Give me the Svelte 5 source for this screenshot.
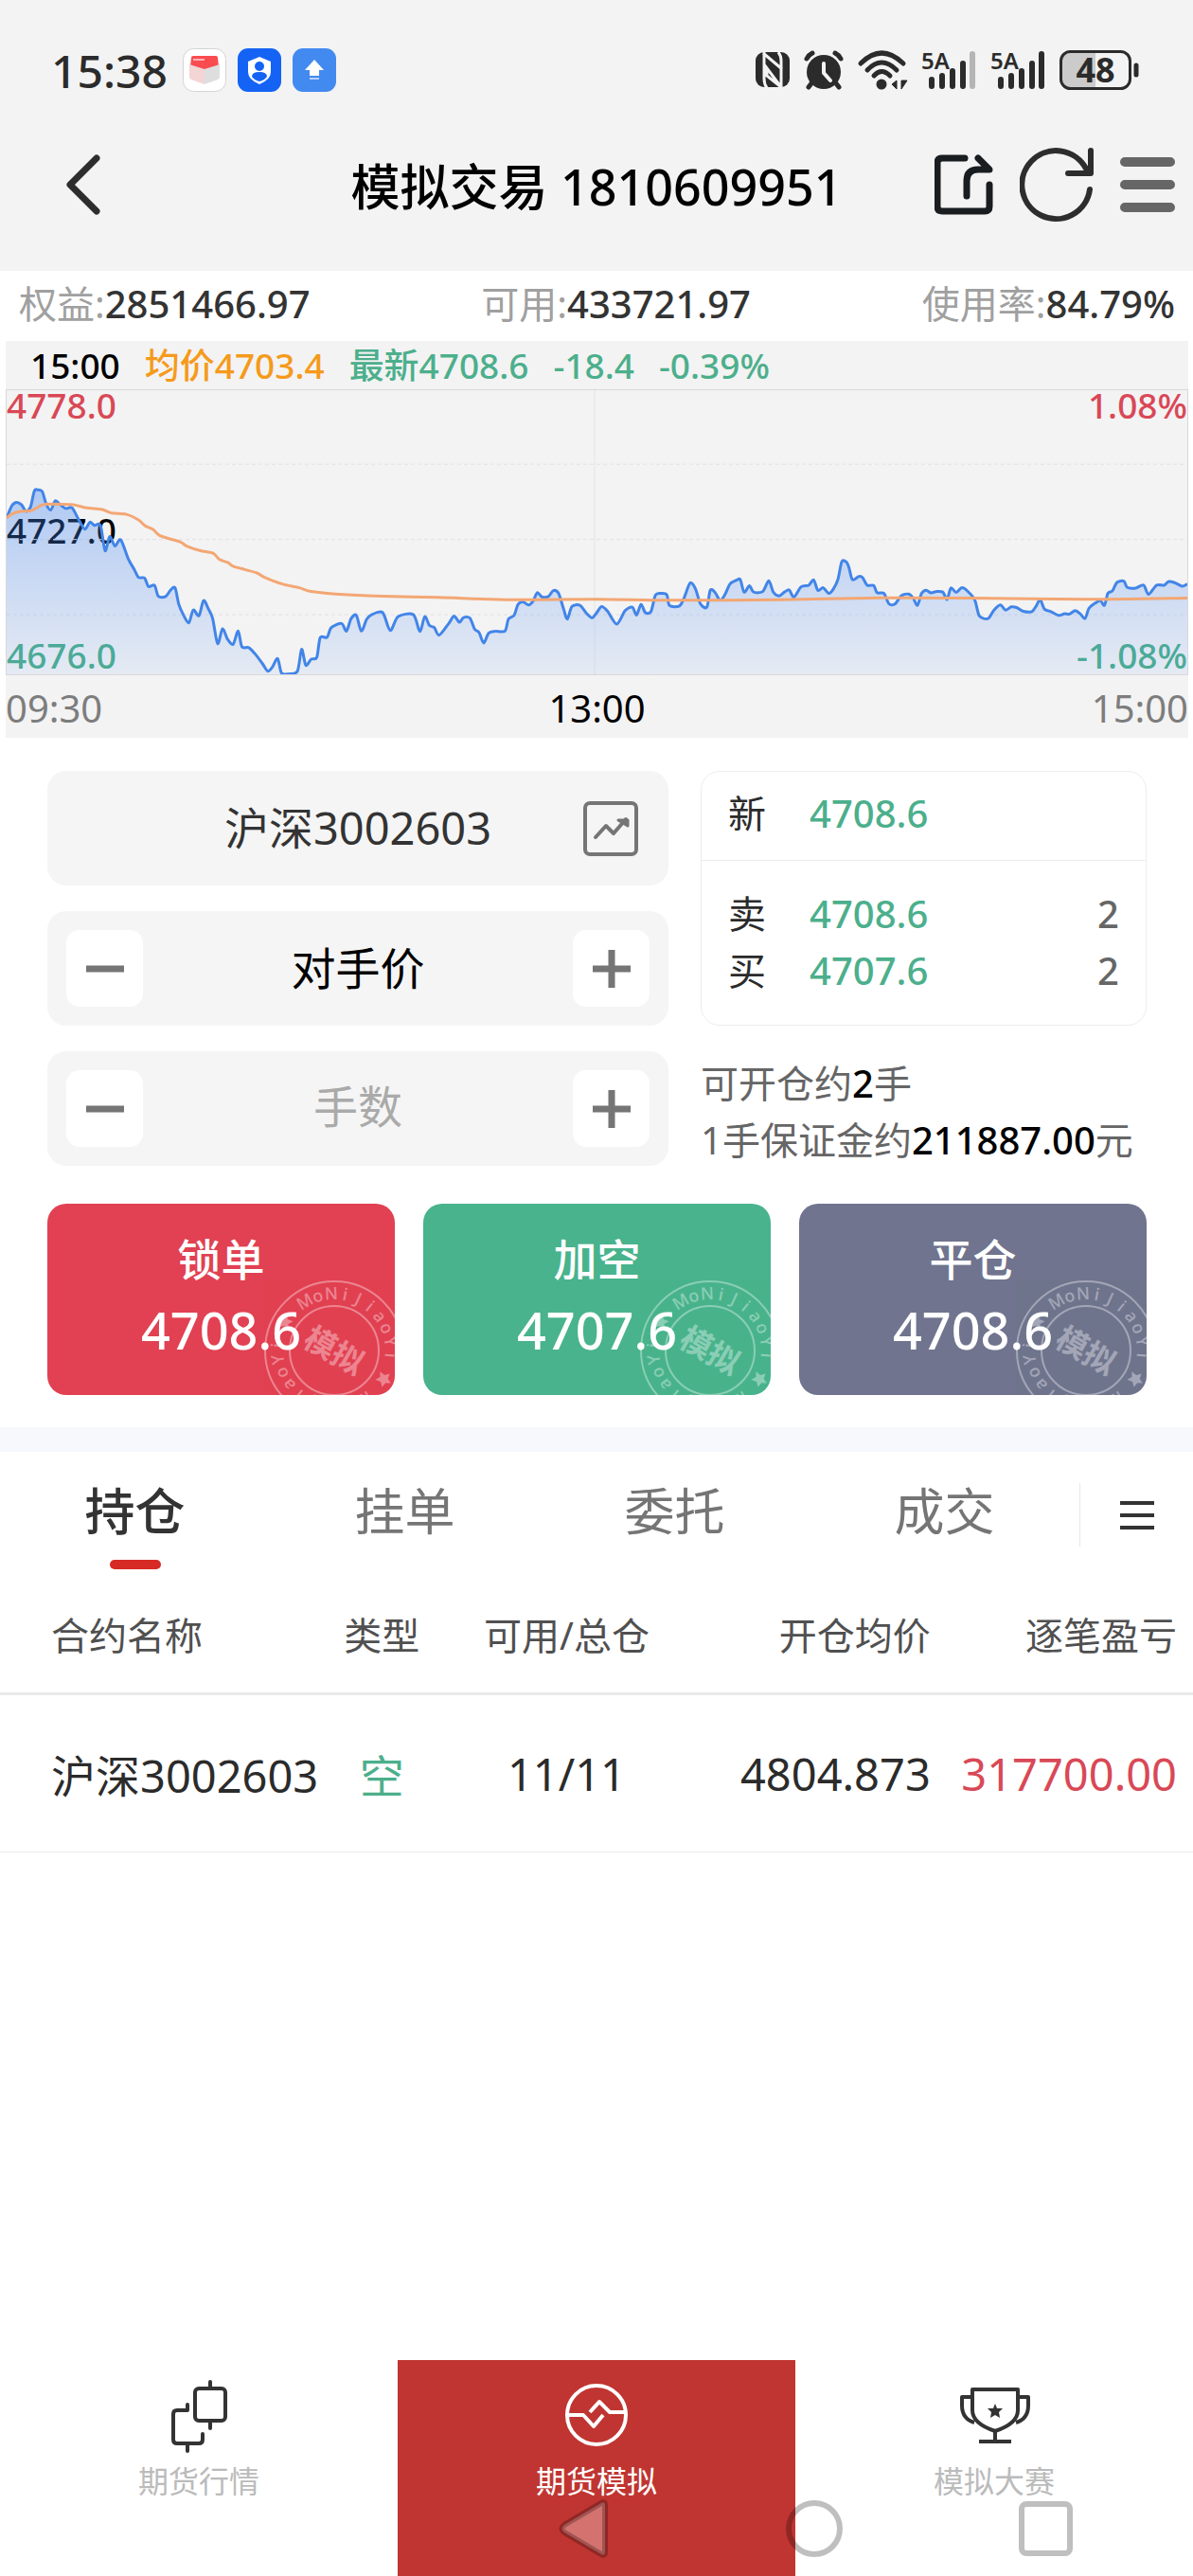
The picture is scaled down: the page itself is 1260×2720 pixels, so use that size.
<script lang="ts">
  type Point = [number, number];

  let price = $state("对手价");
  let lots = $state("");
  let contract = $state("沪深3002603");
  let activeTab = $state("持仓");

  const tabs = ["持仓", "挂单", "委托", "成交"];

  const account = [
    { label: "权益", value: "2851466.97" },
    { label: "可用", value: "433721.97" },
    { label: "使用率", value: "84.79%" },
  ];

  const actions = [
    { label: "锁单", price: "4708.6", kind: "lock" },
    { label: "加空", price: "4707.6", kind: "short" },
    { label: "平仓", price: "4708.6", kind: "close" },
  ];

  const quotes = [
    { side: "卖", price: "4708.6", size: 2 },
    { side: "买", price: "4707.6", size: 2 },
  ];

  const positions = [
    { name: "沪深3002603", side: "空", lots: "11/11", avg: "4804.873", profit: "317700.00" },
  ];

  const sealLetters = [..."MoNiJiaoYi"];

  const last: Point[] = [
    [15, 800], [28, 762], [40, 750], [54, 757], [66, 778], [78, 764], [88, 713], [98, 710], [109, 716], [119, 755], [131, 774], [143, 745], [156, 757], [170, 769], [187, 767],
    [205, 806], [221, 835], [234, 813], [246, 823], [262, 824], [274, 904], [286, 859], [300, 889], [315, 869], [335, 930], [350, 962], [362, 989], [378, 991], [388, 1018], [404, 1014], [414, 1049], [433, 1050], [446, 1030], [458, 1022],
    [468, 1075], [480, 1108], [494, 1134], [506, 1093], [521, 1111], [533, 1063], [546, 1090], [557, 1120], [570, 1200], [583, 1153], [596, 1186], [611, 1202], [624, 1160], [634, 1210], [652, 1213], [670, 1235], [688, 1264], [702, 1288], [714, 1275],
    [728, 1248], [738, 1294], [756, 1297], [780, 1288], [791, 1218], [802, 1269], [816, 1250], [831, 1244], [840, 1181], [858, 1180], [869, 1149], [896, 1136], [909, 1160], [921, 1121], [935, 1110], [948, 1160], [962, 1123], [975, 1108], [1004, 1101],
    [1024, 1158], [1045, 1114], [1085, 1108], [1102, 1161], [1115, 1114], [1127, 1142], [1140, 1149], [1153, 1173], [1178, 1136], [1192, 1112], [1206, 1132], [1217, 1117], [1234, 1119], [1246, 1154], [1258, 1165], [1270, 1198], [1283, 1167], [1300, 1161], [1326, 1160],
    [1335, 1122], [1350, 1110], [1360, 1076], [1373, 1067], [1388, 1077], [1400, 1064], [1411, 1038], [1423, 1051], [1440, 1050], [1453, 1031], [1467, 1040], [1480, 1089], [1490, 1122], [1502, 1082], [1523, 1078], [1540, 1103], [1555, 1118], [1566, 1104],
    [1580, 1082], [1596, 1097], [1620, 1138], [1642, 1095], [1661, 1084], [1672, 1109], [1684, 1075], [1695, 1101], [1710, 1098], [1722, 1045], [1738, 1040], [1752, 1045], [1759, 1079], [1785, 1080], [1797, 1055], [1813, 1007], [1827, 1025], [1840, 1073], [1857, 1084],
    [1866, 1030], [1878, 1036], [1892, 1062], [1905, 1043], [1918, 1010], [1935, 998], [1945, 996], [1955, 1036], [1969, 1016], [1980, 1036], [2004, 1034], [2020, 1000], [2032, 1036], [2047, 1048], [2062, 1035], [2074, 1029], [2086, 1052], [2105, 1019], [2125, 1014], [2138, 997],
    [2149, 1030], [2163, 1022], [2178, 1040], [2190, 1026], [2202, 995], [2212, 939], [2224, 940], [2231, 958], [2240, 996], [2257, 986], [2267, 990], [2279, 1014], [2296, 1015], [2305, 1038], [2323, 1040], [2336, 1073], [2352, 1074], [2368, 1048], [2388, 1042], [2400, 1055], [2411, 1078],
    [2422, 1040], [2434, 1030], [2446, 1038], [2462, 1034], [2478, 1036], [2489, 1059], [2499, 1023], [2513, 1037], [2528, 1022], [2543, 1033], [2562, 1061], [2574, 1112], [2597, 1120], [2612, 1094], [2629, 1077], [2643, 1093], [2658, 1083], [2672, 1085], [2690, 1097], [2712, 1098],
    [2723, 1081], [2734, 1060], [2745, 1090], [2762, 1098], [2782, 1110], [2798, 1105], [2811, 1106], [2826, 1095], [2840, 1106], [2852, 1120], [2862, 1088], [2875, 1074], [2892, 1063], [2903, 1078], [2912, 1040], [2924, 1032], [2936, 1005], [2954, 1001], [2963, 1021], [2985, 1023], [3006, 1014],
    [3019, 1043], [3040, 1014], [3060, 1014], [3072, 1002], [3088, 1006], [3107, 1017], [3121, 1010],
  ];

  const average: Point[] = [
    [15, 800], [28, 787], [54, 778], [80, 776], [110, 757], [135, 755], [187, 757], [225, 767], [265, 772], [292, 784], [330, 788], [362, 806], [380, 825], [400, 836], [420, 857], [470, 875], [490, 890], [525, 904], [558, 912], [575, 932], [598, 942], [612, 954], [672, 974], [692, 988],
    [740, 1010], [785, 1022], [812, 1033], [880, 1042], [980, 1048], [1150, 1053], [1340, 1060], [1568, 1059], [1760, 1062], [2050, 1060], [2320, 1054], [2550, 1055], [2850, 1059], [3121, 1055],
  ];

  // Catmull-Rom spline through all points, flattened enough not to overshoot
  function spline(points: Point[]) {
    let d = `M${points[0][0]} ${points[0][1]}`;
    for (let i = 0; i < points.length - 1; i++) {
      const p0 = points[Math.max(i - 1, 0)];
      const p1 = points[i];
      const p2 = points[i + 1];
      const p3 = points[Math.min(i + 2, points.length - 1)];
      const c1 = [p1[0] + (p2[0] - p0[0]) / 7, p1[1] + (p2[1] - p0[1]) / 7];
      const c2 = [p2[0] - (p3[0] - p1[0]) / 7, p2[1] - (p3[1] - p1[1]) / 7];
      d += `C${c1[0].toFixed(1)} ${c1[1].toFixed(1)} ${c2[0].toFixed(1)} ${c2[1].toFixed(1)} ${p2[0]} ${p2[1]}`;
    }
    return d;
  }

  const lastPath = spline(last);
  const areaPath = `${lastPath}V1298H15Z`;
  const averagePath = spline(average);

  function stepLots(by: number) {
    lots = String(Math.max(0, (Number(lots) || 0) + by));
  }
</script>

{#snippet minus()}
  <svg viewBox="0 0 40 40" width="40" height="40" aria-hidden="true"><path d="M0 20h40" /></svg>
{/snippet}

{#snippet plus()}
  <svg viewBox="0 0 40 40" width="40" height="40" aria-hidden="true"><path d="M0 20h40M20 0v40" /></svg>
{/snippet}

{#snippet signal(full: boolean)}
  <svg width="58" height="42" viewBox="0 0 58 42">
    <text x="0" y="20" class="net">5A</text>
    <g stroke="#2b2b2b" stroke-width="6" stroke-linecap="round">
      <path d="M11 31v7M22 27v11M33 22v16M44 14v24" />
      <path d="M54 4v34" stroke={full ? "#2b2b2b" : "#b5b5b5"} />
    </g>
  </svg>
{/snippet}

{#snippet seal()}
  <svg class="seal" viewBox="-75 -75 150 150" width="150" height="150" aria-hidden="true">
    <circle r="73" />
    <circle r="47" />
    {#each [30, 210] as center}
      {#each sealLetters as letter, i}
        <text y="-54" class="ring" transform={`rotate(${center - 61 + i * 14})`}>{letter}</text>
      {/each}
      <path
        class="star"
        transform={`rotate(${center + 90}) translate(0 -61)`}
        d="M0-8 2.500-3 8-2 4 2 5 8 0 5-5 8-4 2-8-2-2.500-3z"
      />
    {/each}
    <text y="12" class="core" transform="rotate(30)">模拟</text>
  </svg>
{/snippet}

<div class="app">
  <header>
    <div class="status">
      <time>15:38</time>
      <div class="badges">
        <svg width="46" height="46" viewBox="0 0 46 46">
          <rect x=".5" y=".5" width="45" height="45" rx="11" fill="#fff" stroke="#d4d4d4" />
          <path d="M11 8h24q2 0 2 2l1 9-15 5-15-5 1-9q0-2 2-2z" fill="#f94c50" />
          <path d="M7 17l16 5v16L9 33q-2-1-2-3z" fill="#f3d5d5" />
          <path d="M39 17l-16 5v16l14-5q2-1 2-3z" fill="#dedede" />
          <path d="M11 12h12" stroke="#ffb3b5" stroke-width="2" />
        </svg>
        <svg width="46" height="46" viewBox="0 0 46 46">
          <rect width="46" height="46" rx="11" fill="#1463f5" />
          <path d="M23 9l12 5v11q0 8-12 13Q11 33 11 25V14z" fill="#fff" />
          <circle cx="23" cy="19" r="5" fill="#1463f5" />
          <path d="M15 30q0-5 8-5t8 5q-3 4-8 5-5-1-8-5z" fill="#1463f5" />
        </svg>
        <svg width="46" height="46" viewBox="0 0 46 46">
          <rect width="46" height="46" rx="11" fill="#438af0" />
          <path d="M23 12l10 11h-5v6H18v-6h-5z" fill="#fff" />
          <path d="M18 32h10" stroke="#b5d0fa" stroke-width="2" />
        </svg>
      </div>
      <div class="indicators">
        <svg width="36" height="38" viewBox="0 0 36 38">
          <rect width="36" height="37" rx="9" fill="#2b2b2b" />
          <path d="M9 0v28q0 6 3 10M8 1l20 17M27 37L12 17v8l15 12M27 37V9q0-5-3-9" fill="none" stroke="#f3f3f3" stroke-width="3" />
        </svg>
        <svg width="42" height="40" viewBox="0 0 42 40">
          <circle cx="21" cy="22" r="18" fill="#2b2b2b" />
          <path d="M3 8q2-4 6-6M39 8q-2-4-6-6M8 34l-3 4M34 34l3 4" stroke="#2b2b2b" stroke-width="5" stroke-linecap="round" />
          <path d="M21 13v10l7 8" fill="none" stroke="#f3f3f3" stroke-width="4" stroke-linecap="round" />
        </svg>
        <svg width="52" height="42" viewBox="0 0 52 42">
          <g fill="none" stroke="#2b2b2b" stroke-width="5" stroke-linecap="round">
            <path d="M3 14Q25-8 48 14M10 21Q25 5 41 21M17 27Q25 18 34 27" />
          </g>
          <circle cx="25" cy="36" r="5.500" fill="#2b2b2b" />
          <path d="M41 32v9l-5-5zM46 32h6l-6 9z" fill="#2b2b2b" stroke="#2b2b2b" />
        </svg>
        {@render signal(false)}
        {@render signal(true)}
        <svg width="84" height="42" viewBox="0 0 84 42">
          <path d="M12 3h26v36H12q-9 0-9-9V12q0-9 9-9z" fill="#cbcbcb" />
          <rect x="1.500" y="1.500" width="73" height="39" rx="10" fill="none" stroke="#2b2b2b" stroke-width="3" />
          <path d="M81 16v10" stroke="#2b2b2b" stroke-width="5" stroke-linecap="round" />
          <text x="38" y="34" class="charge">48</text>
        </svg>
      </div>
    </div>

    <div class="titlebar">
      <button class="icon-button back" aria-label="返回">
        <svg width="36" height="64" viewBox="0 0 36 64"><path d="M32 4L4 32l28 28" stroke="#2d2d2d" stroke-width="7" /></svg>
      </button>
      <h1>模拟交易 1810609951</h1>
      <div class="tools">
        <button class="icon-button" aria-label="分享">
          <svg width="62" height="64" viewBox="0 0 62 64">
            <path d="M32 4H8q-5 0-5 5v46q0 5 5 5h45q5 0 5-5V32" stroke="#191d20" stroke-width="7" />
            <path d="M34 44V28q0-12 12-12h12L46 4" stroke="#191d20" stroke-width="7" />
          </svg>
        </button>
        <button class="icon-button" aria-label="刷新">
          <svg width="78" height="80" viewBox="0 0 78 80">
            <path d="M74 45A36 36 0 1 1 70 23" stroke="#2d2d2d" stroke-width="6" />
            <path d="M75 4v24H51" stroke="#2d2d2d" stroke-width="6" />
          </svg>
        </button>
        <button class="icon-button" aria-label="菜单">
          <svg width="58" height="58" viewBox="0 0 58 58">
            <path d="M5 5h48M5 29h48M5 53h48" stroke="#666" stroke-width="10" />
          </svg>
        </button>
      </div>
    </div>
  </header>

  <dl class="account">
    {#each account as { label, value }}
      <div><dt>{label}:</dt><dd>{value}</dd></div>
    {/each}
  </dl>

  <section class="chart">
    <div class="summary">
      <span>15:00</span>
      <span class="avg">均价4703.4</span>
      <span class="down">最新4708.6</span>
      <span class="down">-18.4</span>
      <span class="down">-0.39%</span>
    </div>
    <div class="plot">
      <div class="scale">
        <span class="up">4778.0</span>
        <span>4727.0</span>
        <span class="down">4676.0</span>
      </div>
      <div class="scale right">
        <span class="up">1.08%</span>
        <span class="down">-1.08%</span>
      </div>
      <svg viewBox="15 392 3106 906" preserveAspectRatio="none" aria-hidden="true">
        <defs>
          <linearGradient id="fill" x1="0" y1="0" x2="0" y2="1">
            <stop offset="0" stop-color="#4285f4" stop-opacity=".38" />
            <stop offset="1" stop-color="#4285f4" stop-opacity=".08" />
          </linearGradient>
        </defs>
        <path class="grid" d="M15 628H3121M15 868H3121M15 1108H3121" />
        <path class="middle" d="M1562 392V1298" />
        <path d={areaPath} fill="url(#fill)" />
        <path class="line" d={lastPath} stroke="#4285e8" />
        <path class="line" d={averagePath} stroke="#f3a774" />
      </svg>
    </div>
    <div class="times">
      <span>09:30</span>
      <span class="noon">13:00</span>
      <span>15:00</span>
    </div>
  </section>

  <section class="order">
    <div class="fields">
      <div class="field">
        <input type="text" class="contract" aria-label="合约" bind:value={contract} />
        <button class="icon-button" aria-label="行情图">
          <svg width="58" height="58" viewBox="0 0 58 58">
            <rect x="2" y="2" width="54" height="54" rx="5" stroke="#757575" stroke-width="4" />
            <path d="M13 38l11-12 8 8 13-15" stroke="#757575" stroke-width="4" />
            <path d="M37 20h10v6z" stroke="#757575" stroke-width="3" fill="#757575" />
          </svg>
        </button>
      </div>
      <div class="field">
        <button class="step" aria-label="减价">{@render minus()}</button>
        <input type="text" aria-label="价格" bind:value={price} />
        <button class="step" aria-label="加价">{@render plus()}</button>
      </div>
      <div class="field">
        <button class="step" aria-label="减少手数" onclick={() => stepLots(-1)}>{@render minus()}</button>
        <input type="text" aria-label="手数" placeholder="手数" bind:value={lots} />
        <button class="step" aria-label="增加手数" onclick={() => stepLots(1)}>{@render plus()}</button>
      </div>
    </div>

    <div class="market">
      <div class="quotes">
        <div class="quote latest">
          <span>新</span>
          <b class="down">4708.6</b>
        </div>
        <div class="depth">
          {#each quotes as quote}
            <div class="quote">
              <span>{quote.side}</span>
              <b class="down">{quote.price}</b>
              <b class="size">{quote.size}</b>
            </div>
          {/each}
        </div>
      </div>
      <p>可开仓约<b>2</b>手<br />1手保证金约<b>211887.00</b>元</p>
    </div>
  </section>

  <div class="actions">
    {#each actions as action}
      <button class={action.kind}>
        {@render seal()}
        <span>{action.label}</span>
        <strong>{action.price}</strong>
      </button>
    {/each}
  </div>

  <div class="tabs">
    {#each tabs as tab}
      <button class="tab" class:active={tab === activeTab} onclick={() => (activeTab = tab)}>
        {tab}
      </button>
    {/each}
    <button class="more" aria-label="更多">
      <svg width="38" height="32" viewBox="0 0 38 32"><path d="M1 3h36M1 16h36M1 29h36" /></svg>
    </button>
  </div>

  <table>
    <colgroup>
      <col class="col-name" />
      <col class="col-side" />
      <col class="col-lots" />
      <col class="col-cost" />
      <col />
    </colgroup>
    <thead>
      <tr>
        <th class="name">合约名称</th>
        <th>类型</th>
        <th>可用/总仓</th>
        <th class="cost">开仓均价</th>
        <th class="profit">逐笔盈亏</th>
      </tr>
    </thead>
    <tbody>
      {#each positions as row}
        <tr>
          <td class="name">{row.name}</td>
          <td class="down">{row.side}</td>
          <td>{row.lots}</td>
          <td class="cost">{row.avg}</td>
          <td class="profit up">{row.profit}</td>
        </tr>
      {/each}
    </tbody>
  </table>

  <nav>
    <a href="#market">
      <svg width="80" height="80" viewBox="0 0 80 80" stroke="#333" stroke-width="4" stroke-linecap="round">
        <path d="M52 5v7M52 46v8M28 70v8" />
        <rect x="36" y="12" width="32" height="34" rx="4" />
        <path d="M28 29v6H17q-4 0-4 4v27q0 4 4 4h23q4 0 4-4v-6" />
      </svg>
      期货行情
    </a>
    <a href="#simulate" class="current">
      <svg width="80" height="80" viewBox="0 0 80 80" stroke="#fff" stroke-width="4">
        <circle cx="40" cy="40" r="31" />
        <path d="M9 40h17l11 12 10-12M71 37H54L43 26 33 37" />
      </svg>
      期货模拟
    </a>
    <a href="#contest">
      <svg width="80" height="80" viewBox="0 0 80 80" stroke="#333" stroke-width="4">
        <path d="M17 13h48v22q0 14-24 22Q17 49 17 35zM41 57v10M24 68h34" />
        <path d="M17 21H6v9q0 14 13 18M65 21h11v9q0 14-13 18" />
        <path d="M41 28l2 5 6 0-4 4 1 6-5-3-5 3 1-6-4-4 6 0z" fill="#333" stroke="none" />
      </svg>
      模拟大赛
    </a>
  </nav>

  <div class="system">
    <svg width="56" height="64" viewBox="0 0 56 64">
      <path d="M50 7v50q0 4-4 2L7 36q-5-4 0-8L46 5q4-2 4 2z" fill="#ffffff4d" />
    </svg>
    <svg width="60" height="64" viewBox="0 0 60 64"><circle cx="30" cy="32" r="27" /></svg>
    <svg width="58" height="64" viewBox="0 0 58 64"><rect x="4" y="6" width="51" height="52" rx="5" /></svg>
  </div>
</div>

<style>
  :global(body) {
    margin: 0;
    background: #fff;
  }

  .app {
    position: relative;
    display: flex;
    flex-direction: column;
    min-height: 100vh;
    color: #2b2b2b;
    font-family: "Noto Sans", "Noto Sans CJK SC", sans-serif;
    font-size: 40px;
  }

  svg {
    display: block;
    flex: none;
  }

  button {
    padding: 0;
    border: none;
    background: none;
    color: inherit;
    font: inherit;
    cursor: pointer;
  }

  b {
    font-weight: 500;
  }

  .up {
    color: #d94856;
  }

  .down {
    color: #4caf8c;
  }

  header {
    background: #f3f3f3;
  }

  .status {
    display: flex;
    align-items: center;
    height: 148px;
    padding: 0 57px 0 54px;
  }

  .status time {
    font-size: 48px;
    font-weight: 500;
  }

  .badges {
    display: flex;
    gap: 12px;
    margin-left: 16px;
  }

  .indicators {
    display: flex;
    align-items: center;
    gap: 15px;
    margin-left: auto;
  }

  .indicators svg {
    overflow: visible;
  }

  .net {
    fill: #2b2b2b;
    font-size: 24px;
    font-weight: 600;
  }

  .charge {
    fill: #2b2b2b;
    font-size: 36px;
    font-weight: 700;
    text-anchor: middle;
  }

  .titlebar {
    display: grid;
    grid-template-columns: 1fr auto 1fr;
    align-items: center;
    height: 94px;
    padding: 0 19px 44px;
  }

  .icon-button {
    display: block;
  }

  .icon-button svg {
    fill: none;
    stroke-linecap: round;
    stroke-linejoin: round;
  }

  h1 {
    margin: 0;
    padding-top: 4px;
    color: #000;
    font-size: 52px;
    font-weight: 500;
    line-height: 70px;
    white-space: nowrap;
  }

  .back {
    justify-self: start;
    margin-left: 51px;
  }

  .tools {
    display: flex;
    align-items: center;
    justify-content: flex-end;
    gap: 28px;
  }

  .account {
    display: flex;
    justify-content: space-between;
    margin: 0;
    padding: 0 19px 4px 20px;
    line-height: 70px;
  }

  .account div {
    display: flex;
  }

  .account dt {
    color: #a0a0a0;
  }

  .account dd {
    margin: 0;
    color: #333;
    font-weight: 500;
  }

  .chart {
    margin: 0 5px 0 6px;
    background: #f3f3f3;
    font-size: 37px;
  }

  .summary {
    display: flex;
    gap: 26px;
    padding-left: 26px;
    color: #000;
    font-weight: 500;
    line-height: 51px;
  }

  .avg {
    color: #f59a1b;
  }

  .plot {
    position: relative;
    height: 300px;
    border: 1px solid #d8d8dc;
  }

  .plot svg {
    position: relative;
    width: 100%;
    height: 100%;
  }

  .plot path {
    fill: none;
    vector-effect: non-scaling-stroke;
  }

  .plot path[fill] {
    fill: url(#fill);
  }

  .plot .grid {
    stroke: #e2e2e4;
    stroke-dasharray: 4 3;
  }

  .plot .middle {
    stroke: #e5e5e8;
  }

  .plot .line {
    stroke-width: 3;
    stroke-linejoin: round;
  }

  .scale {
    position: absolute;
    inset: 0;
    display: flex;
    flex-direction: column;
    justify-content: space-between;
    padding-bottom: 4px;
    color: #000;
    font-weight: 500;
    line-height: 32px;
  }

  .scale .up {
    color: #d94856;
  }

  .scale .down {
    color: #4caf8c;
  }

  .scale.right {
    align-items: flex-end;
  }

  .times {
    display: flex;
    justify-content: space-between;
    padding-top: 4px;
    color: #7d7d7d;
    font-size: 40px;
    line-height: 62px;
  }

  .noon {
    color: #000;
  }

  .order {
    display: grid;
    grid-template-columns: minmax(0, 656fr) minmax(0, 471fr);
    gap: 34px;
    padding: 35px 49px 0 50px;
  }

  .fields {
    display: flex;
    flex-direction: column;
    gap: 27px;
  }

  .field {
    display: flex;
    align-items: center;
    height: 121px;
    box-sizing: border-box;
    padding: 0 20px;
    border-radius: 20px;
    background: #f5f5f5;
  }

  .field input {
    flex: 1;
    min-width: 0;
    padding: 0 0 6px;
    border: none;
    outline: none;
    background: none;
    color: #000;
    font: inherit;
    font-size: 47px;
    text-align: center;
  }

  .field .contract {
    padding-left: 70px;
    color: #333;
  }

  .field .icon-button {
    margin: 0 12px 0 0;
  }

  .field input::placeholder {
    color: #aaa;
    opacity: 1;
  }

  .step {
    display: grid;
    place-items: center;
    width: 81px;
    height: 81px;
    border-radius: 14px;
    background: #fff;
  }

  .step svg {
    fill: none;
    stroke: #757575;
    stroke-width: 7;
  }

  .quotes {
    border: 1px solid #ededed;
    border-radius: 20px;
  }

  .quote {
    display: grid;
    grid-template-columns: 86px 1fr auto;
    padding: 0 28px;
    line-height: 60px;
  }

  .latest {
    padding: 14px 28px 19px;
    border-bottom: 1px solid #ededed;
  }

  .depth {
    padding: 26px 0 27px;
  }

  .size {
    color: #666;
  }

  .market p {
    margin: 31px 0 0;
    color: #666;
    line-height: 60px;
    white-space: nowrap;
  }

  .market p b {
    color: #000;
  }

  .actions {
    display: grid;
    grid-template-columns: repeat(3, 1fr);
    gap: 30px;
    padding: 37px 49px 34px 50px;
    border-bottom: 26px solid #f7f8fd;
  }

  .actions button {
    position: relative;
    display: flex;
    flex-direction: column;
    align-items: center;
    gap: 10px;
    padding: 28px 0 34px;
    overflow: hidden;
    border-radius: 20px;
    color: #fff;
    font-size: 46px;
    font-weight: 500;
    line-height: 60px;
  }

  .actions strong {
    position: relative;
    font-size: 54px;
    font-weight: 500;
    line-height: 70px;
  }

  .lock {
    background: #e14152;
  }

  .short {
    background: #48b38c;
  }

  .close {
    background: #70748e;
  }

  .seal {
    position: absolute;
    right: -11px;
    bottom: -28px;
    opacity: 0.36;
  }

  .seal circle {
    fill: none;
    stroke: #fff;
    stroke-width: 2;
  }

  .seal text {
    fill: #fff;
    text-anchor: middle;
  }

  .ring {
    font-size: 18px;
  }

  .core {
    font-size: 33px;
    font-weight: 700;
  }

  .star {
    fill: #fff;
  }

  .tabs {
    display: grid;
    grid-template-columns: repeat(4, 285fr) 120fr;
    height: 133px;
  }

  .tab {
    display: flex;
    flex-direction: column;
    align-items: center;
    gap: 16px;
    padding-top: 28px;
    color: #757575;
    font-size: 53px;
    line-height: 70px;
  }

  .tab.active {
    color: #333;
    font-weight: 500;
  }

  .tab.active::after {
    content: "";
    width: 54px;
    height: 10px;
    border-radius: 5px;
    background: #d62a24;
  }

  .more {
    display: grid;
    place-items: center;
    align-self: start;
    height: 67px;
    margin-top: 33px;
    border-left: 1px solid #e8e8e8;
  }

  .more svg {
    stroke: #333;
    stroke-width: 4;
  }

  table {
    width: 100%;
    border-collapse: collapse;
    table-layout: fixed;
  }

  .col-name {
    width: 27%;
  }

  .col-side {
    width: 10%;
  }

  .col-lots {
    width: 21%;
  }

  .col-cost {
    width: 20%;
  }

  th {
    height: 117px;
    padding: 0 0 4px;
    border-bottom: 3px solid #e9e9e9;
    color: #505050;
    font-weight: 400;
    white-space: nowrap;
  }

  td {
    height: 165px;
    padding: 0;
    border-bottom: 1px solid #e9e9e9;
    font-size: 47px;
    text-align: center;
    white-space: nowrap;
  }

  .name {
    padding-left: 54px;
    text-align: left;
  }

  .cost {
    text-align: right;
  }

  .profit {
    padding-right: 17px;
    text-align: right;
  }

  nav {
    display: grid;
    grid-template-columns: repeat(3, 1fr);
    margin-top: auto;
  }

  nav a {
    display: flex;
    flex-direction: column;
    align-items: center;
    height: 210px;
    padding-top: 18px;
    color: #bbb;
    font-size: 32px;
    line-height: 60px;
    text-decoration: none;
  }

  nav svg {
    fill: none;
    stroke-linejoin: round;
  }

  nav .current {
    background: #c03531;
    color: #fff;
  }

  .system {
    position: absolute;
    right: 127px;
    bottom: 18px;
    display: flex;
    gap: 185px;
    pointer-events: none;
  }

  .system svg {
    fill: none;
    stroke: #00000040;
    stroke-width: 6;
  }
</style>
